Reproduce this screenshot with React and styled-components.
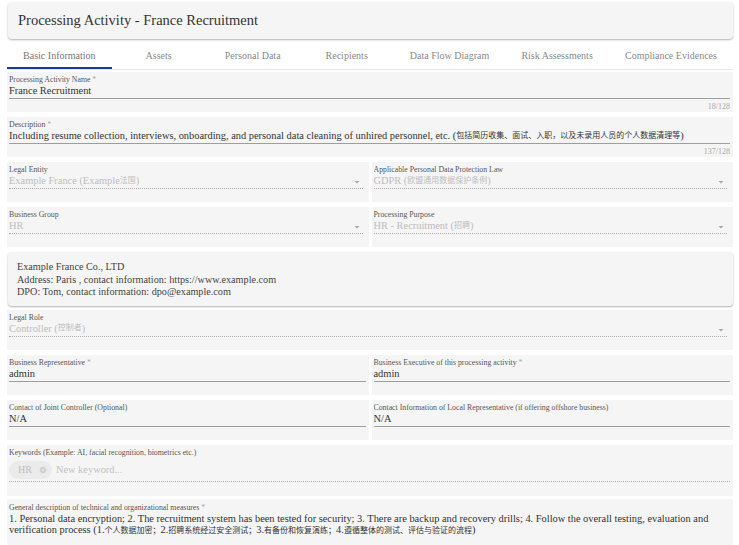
import React from 'react';
import styled, { createGlobalStyle } from 'styled-components';

const tabs = [
  'Basic Information',
  'Assets',
  'Personal Data',
  'Recipients',
  'Data Flow Diagram',
  'Risk Assessments',
  'Compliance Evidences',
];

const GlobalStyle = createGlobalStyle`
  body {
    margin: 0;
    background: #fff;
    font-family: "Liberation Serif", "Noto Sans CJK SC", serif;
    color: #333;
  }
`;

const Page = styled.div`
  padding: 2px 6px 0 7px;
  height: 545px;
  overflow: hidden;
  box-sizing: border-box;
`;

const Header = styled.div`
  height: 37px;
  display: flex;
  align-items: center;
  padding-left: 10px;
  margin-left: 1px;
  background: #f5f5f5;
  border-radius: 4px;
  box-shadow: 0 1px 2px rgba(0, 0, 0, 0.3);
`;

const Title = styled.h1`
  margin: 0;
  font-size: 14.5px;
  font-weight: normal;
  color: #333;
`;

const TabBar = styled.div`
  display: flex;
  margin-top: 3px;
  border-bottom: 1px solid #e6e6e6;
`;

const Tab = styled.div`
  flex: 1 0 auto;
  min-width: 94px;
  padding: 2px 14px 0;
  height: 27px;
  box-sizing: border-box;
  display: flex;
  align-items: center;
  justify-content: center;
  font-size: 10px;
  color: ${({ active }) => (active ? '#777' : '#8a8a8a')};
  border-bottom: 2px solid ${({ active }) => (active ? '#1b3a9e' : 'transparent')};
  white-space: nowrap;
`;

const Form = styled.div`
  display: flex;
  flex-direction: column;
  gap: 5px;
  margin-top: 2px;
`;

const Row = styled.div`
  display: grid;
  grid-template-columns: 1fr 1fr;
  gap: 3px;
`;

const Field = styled.div`
  background: #f5f5f5;
  height: ${({ h }) => h || 40}px;
  margin-top: ${({ pull }) => (pull ? -pull : 0)}px;
  padding: ${({ top }) => top || 3}px 3px 0 2px;
  box-sizing: border-box;
  overflow: hidden;
`;

const Label = styled.div`
  font-size: 7.8px;
  line-height: 9px;
  color: #555;
  white-space: nowrap;
  overflow: hidden;
`;

const Req = styled.span`
  color: #aaa;
`;

const Value = styled.div`
  position: relative;
  height: 14px;
  margin-right: ${({ select }) => (select ? '3px' : '0')};
  font-size: 10.4px;
  line-height: 14px;
  color: ${({ muted }) => (muted ? '#bdbdbd' : '#333')};
  border-bottom: 1px ${({ dotted }) => (dotted ? 'dotted #aaa' : 'solid #9e9e9e')};
  white-space: nowrap;
  display: flex;
  align-items: center;
`;

const Cjk = styled.span`
  font-size: 0.77em;
  line-height: 1;
  text-spacing-trim: space-all;
`;

const Arrow = styled.svg`
  position: absolute;
  right: 0;
  top: 2px;
  width: 12px;
  height: 12px;
  fill: #a8a8a8;
`;

const Helper = styled.div`
  text-align: right;
  padding-top: 2px;
  font-size: 8px;
  line-height: 12px;
  color: #aaa;
`;

const Card = styled.div`
  background: #f5f5f5;
  border-radius: 4px;
  box-shadow: 0 1px 2px rgba(0, 0, 0, 0.3);
  padding: 9px 9px 7px;
  margin: 0 0 -1px 1px;
  font-size: 10.2px;
  line-height: 12.5px;
  color: #444;
`;

const Chip = styled.span`
  display: inline-flex;
  align-items: center;
  gap: 7px;
  height: 18px;
  padding: 0 5px 0 9px;
  margin: 0 4px 0 0;
  border-radius: 9px;
  background: #ebebeb;
  color: #bdbdbd;
  font-size: 10px;
`;

const ChipIcon = styled.svg`
  width: 8px;
  height: 8px;
  fill: #cdcdcd;
`;

const Placeholder = styled.span`
  color: #c2c2c2;
`;

const Tall = styled(Value)`
  height: 22px;
  padding-top: 2px;
`;

const Multi = styled.div`
  font-size: 10.4px;
  line-height: 11.6px;
  color: #333;
  padding: 1px 10px 0 0;
`;

// wrap runs of Chinese characters so they get the narrower CJK size
const cjkRun = /([\u3000-\u303f\u4e00-\u9fff\uff00-\uffef]+)/;
const withCjk = (text) =>
  text.split(cjkRun).map((part, i) => (i % 2 ? <Cjk key={i}>{part}</Cjk> : part));

const DropArrow = () => (
  <Arrow viewBox="0 0 24 24">
    <path d="M7 10l5 5 5-5z" />
  </Arrow>
);

const TextField = ({ label, required, value, helper, h }) => (
  <Field h={h}>
    <Label>
      {label}
      {required && <Req> *</Req>}
    </Label>
    <Value>{withCjk(value)}</Value>
    {helper && <Helper>{helper}</Helper>}
  </Field>
);

const SelectField = ({ label, value }) => (
  <Field>
    <Label>{label}</Label>
    <Value select dotted muted>
      {withCjk(value)}
      <DropArrow />
    </Value>
  </Field>
);

const App = () => (
  <Page>
    <GlobalStyle />
    <Header>
      <Title>Processing Activity - France Recruitment</Title>
    </Header>

    <TabBar>
      {tabs.map((t, i) => (
        <Tab key={t} active={i === 0}>
          {t}
        </Tab>
      ))}
    </TabBar>

    <Form>
      <TextField label="Processing Activity Name" required value="France Recruitment" helper="18/128" />
      <TextField
        label="Description"
        required
        value="Including resume collection, interviews, onboarding, and personal data cleaning of unhired personnel, etc. (包括简历收集、面试、入职，以及未录用人员的个人数据清理等)"
        helper="137/128"
      />

      <Row>
        <SelectField label="Legal Entity" value="Example France (Example法国)" />
        <SelectField label="Applicable Personal Data Protection Law" value="GDPR (欧盟通用数据保护条例)" />
      </Row>
      <Row>
        <SelectField label="Business Group" value="HR" />
        <SelectField label="Processing Purpose" value="HR - Recruitment (招聘)" />
      </Row>

      <Card>
        Example France Co., LTD
        <br />
        Address: Paris , contact information: https://www.example.com
        <br />
        DPO: Tom, contact information: dpo@example.com
      </Card>

      <SelectField label="Legal Role" value="Controller (控制者)" />

      <Row>
        <TextField label="Business Representative" required value="admin" />
        <TextField label="Business Executive of this processing activity" required value="admin" />
      </Row>
      <Row>
        <TextField label="Contact of Joint Controller (Optional)" value="N/A" />
        <TextField label="Contact Information of Local Representative (if offering offshore business)" value="N/A" />
      </Row>

      <Field h={51}>
        <Label>Keywords (Example: AI, facial recognition, biometrics etc.)</Label>
        <Tall dotted>
          <Chip>
            HR
            <ChipIcon viewBox="0 0 24 24">
              <path d="M12 2C6.47 2 2 6.47 2 12s4.47 10 10 10 10-4.47 10-10S17.53 2 12 2zm5 13.59L15.59 17 12 13.41 8.41 17 7 15.59 10.59 12 7 8.41 8.41 7 12 10.59 15.59 7 17 8.41 13.41 12 17 15.59z" />
            </ChipIcon>
          </Chip>
          <Placeholder>New keyword...</Placeholder>
        </Tall>
      </Field>

      <Field h={60} pull={2} top={4}>
        <Label>
          General description of technical and organizational measures<Req> *</Req>
        </Label>
        <Multi>
          {withCjk(
            '1. Personal data encryption; 2. The recruitment system has been tested for security; 3. There are backup and recovery drills; 4. Follow the overall testing, evaluation and verification process (1.个人数据加密；2.招聘系统经过安全测试；3.有备份和恢复演练；4.遵循整体的测试、评估与验证的流程)'
          )}
        </Multi>
      </Field>
    </Form>
  </Page>
);

export default App;
